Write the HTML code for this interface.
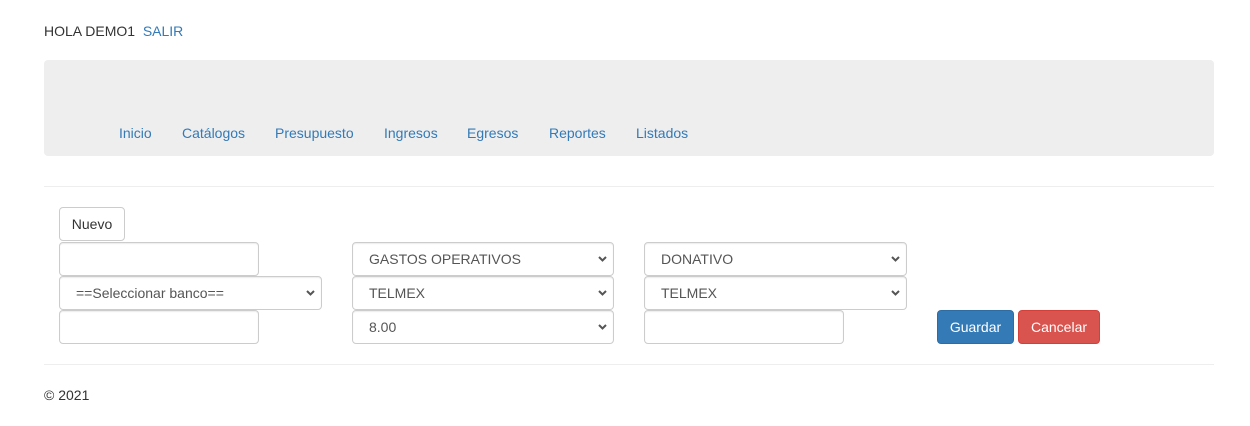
<!DOCTYPE html>
<html><head><meta charset="utf-8"><style>
*{box-sizing:border-box;margin:0;padding:0}
body{width:1250px;height:426px;background:#fff;font-family:"Liberation Sans",Arial,sans-serif;font-size:14px;color:#333;position:relative;overflow:hidden}
.a{position:absolute}
.t{line-height:16px;white-space:nowrap}
.link{color:#337ab7}
.nav{left:44px;top:60px;width:1170px;height:96px;background:#eee;border-radius:4px}
.nav span{position:absolute;top:65px;color:#337ab7;line-height:16px}
.hr{left:44px;width:1170px;height:1px;background:#eee}
.in{border:1px solid #ccc;border-radius:4px;height:34px;background:#fff;box-shadow:inset 0 1px 1px rgba(0,0,0,.075)}
.sel{padding-left:16px;line-height:32px;color:#555}
.sel svg{position:absolute;right:6px;top:13px}
.btn{border-radius:4px;height:34px;line-height:32px;text-align:center;border:1px solid}
</style></head><body>
<div class="a t" style="left:44px;top:23px">HOLA DEMO1&nbsp; <span class="link">SALIR</span></div>
<div class="a nav">
<span style="left:75px">Inicio</span>
<span style="left:138px">Catálogos</span>
<span style="left:231px">Presupuesto</span>
<span style="left:340px">Ingresos</span>
<span style="left:423px">Egresos</span>
<span style="left:505px">Reportes</span>
<span style="left:592px">Listados</span>
</div>
<div class="a hr" style="top:186px"></div>
<div class="a btn" style="left:59px;top:207px;width:66px;border-color:#ccc;color:#333">Nuevo</div>

<div class="a in" style="left:59px;top:242px;width:200px"></div>
<div class="a in sel" style="left:59px;top:276px;width:263px">==Seleccionar banco==<svg width="9" height="6" viewBox="0 0 9 6"><path d="M1 1l3.5 3.5L8 1" stroke="#555" stroke-width="2" fill="none"/></svg></div>
<div class="a in" style="left:59px;top:310px;width:200px"></div>

<div class="a in sel" style="left:352px;top:242px;width:262px">GASTOS OPERATIVOS<svg width="9" height="6" viewBox="0 0 9 6"><path d="M1 1l3.5 3.5L8 1" stroke="#555" stroke-width="2" fill="none"/></svg></div>
<div class="a in sel" style="left:352px;top:276px;width:262px">TELMEX<svg width="9" height="6" viewBox="0 0 9 6"><path d="M1 1l3.5 3.5L8 1" stroke="#555" stroke-width="2" fill="none"/></svg></div>
<div class="a in sel" style="left:352px;top:310px;width:262px">8.00<svg width="9" height="6" viewBox="0 0 9 6"><path d="M1 1l3.5 3.5L8 1" stroke="#555" stroke-width="2" fill="none"/></svg></div>

<div class="a in sel" style="left:644px;top:242px;width:263px">DONATIVO<svg width="9" height="6" viewBox="0 0 9 6"><path d="M1 1l3.5 3.5L8 1" stroke="#555" stroke-width="2" fill="none"/></svg></div>
<div class="a in sel" style="left:644px;top:276px;width:263px">TELMEX<svg width="9" height="6" viewBox="0 0 9 6"><path d="M1 1l3.5 3.5L8 1" stroke="#555" stroke-width="2" fill="none"/></svg></div>
<div class="a in" style="left:644px;top:310px;width:200px"></div>

<div class="a btn" style="left:937px;top:310px;width:77px;background:#337ab7;border-color:#2e6da4;color:#fff">Guardar</div>
<div class="a btn" style="left:1018px;top:310px;width:82px;background:#d9534f;border-color:#d43f3a;color:#fff">Cancelar</div>

<div class="a hr" style="top:364px"></div>
<div class="a t" style="left:44px;top:387px">© 2021</div>
</body></html>
